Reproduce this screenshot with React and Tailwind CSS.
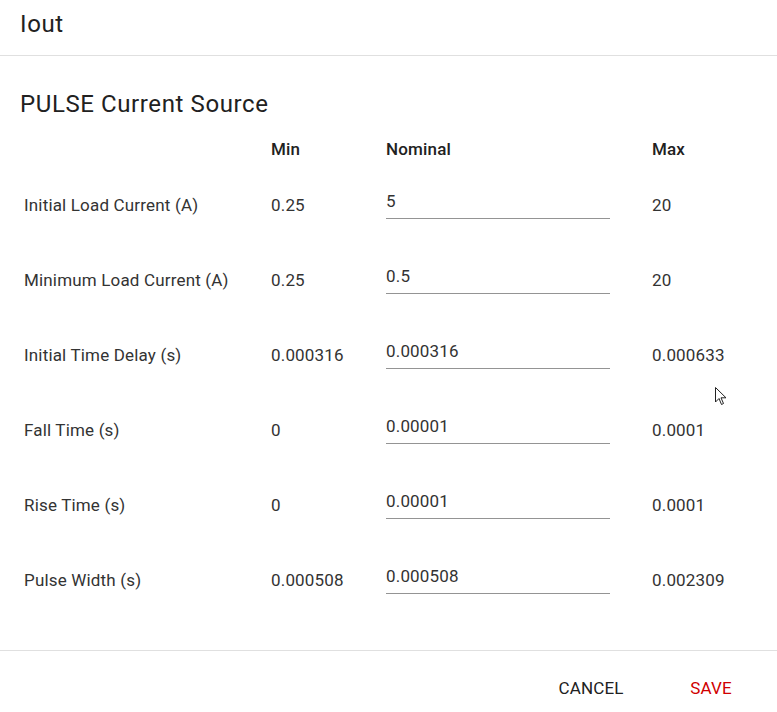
import React, { useState } from 'react';

const rows = [
  { label: 'Initial Load Current (A)', min: '0.25', nominal: '5', max: '20' },
  { label: 'Minimum Load Current (A)', min: '0.25', nominal: '0.5', max: '20' },
  { label: 'Initial Time Delay (s)', min: '0.000316', nominal: '0.000316', max: '0.000633' },
  { label: 'Fall Time (s)', min: '0', nominal: '0.00001', max: '0.0001' },
  { label: 'Rise Time (s)', min: '0', nominal: '0.00001', max: '0.0001' },
  { label: 'Pulse Width (s)', min: '0.000508', nominal: '0.000508', max: '0.002309' },
];

const ParamRow = ({ row, value, onChange }) => (
  <div className="grid grid-cols-[247px_115px_266px_1fr] items-center h-[75px]">
    <div>{row.label}</div>
    <div>{row.min}</div>
    <div className="mb-2">
      <input
        value={value}
        onChange={(e) => onChange(e.target.value)}
        className="w-[224px] h-[34px] border-b border-[#949494] text-[#333] tracking-[0.01em] outline-none bg-transparent"
      />
    </div>
    <div>{row.max}</div>
  </div>
);

const App = () => {
  const [values, setValues] = useState(rows.map((r) => r.nominal));

  const setValue = (i, v) => {
    const next = [...values];
    next[i] = v;
    setValues(next);
  };

  return (
    <div
      className="relative w-[777px] h-[712px] bg-white text-[#212121] overflow-hidden"
      style={{ fontFamily: 'Roboto, "Liberation Sans", sans-serif' }}
    >
      <div className="h-[56px] border-b border-[#e0e0e0] px-5 pt-2">
        <h2 className="text-[24px] leading-[32px] tracking-[0.025em]">Iout</h2>
      </div>

      <div className="h-[594px] pt-8 px-5">
        <h3 className="text-[24px] leading-[32px] tracking-[0.025em]">PULSE Current Source</h3>

        <div className="pl-1 mt-3 text-[17px] tracking-[0.01em] text-[#333]">
          <div className="grid grid-cols-[247px_115px_266px_1fr] items-center h-[36px] font-medium text-[#212121]">
            <div></div>
            <div>Min</div>
            <div>Nominal</div>
            <div>Max</div>
          </div>
          {rows.map((row, i) => (
            <ParamRow key={row.label} row={row} value={values[i]} onChange={(v) => setValue(i, v)} />
          ))}
        </div>
      </div>

      <div className="border-t border-[#e0e0e0] flex justify-end gap-6 pr-[18px] pt-5">
        <button className="w-24 h-9 text-[17px] tracking-[0.01em] uppercase text-[#212121]">Cancel</button>
        <button className="w-24 h-9 text-[17px] tracking-[0.01em] uppercase text-[#d00000]">Save</button>
      </div>

      {/* mouse pointer */}
      <svg className="absolute left-[715px] top-[387px]" width="12" height="19" viewBox="0 0 12 19">
        <path d="M0.5 0.5 L0.5 15 L4 11.5 L6.5 17.5 L8.5 16.5 L6 10.8 L11 10.8 Z" fill="white" stroke="#222" strokeWidth="1" />
      </svg>
    </div>
  );
};

export default App;
